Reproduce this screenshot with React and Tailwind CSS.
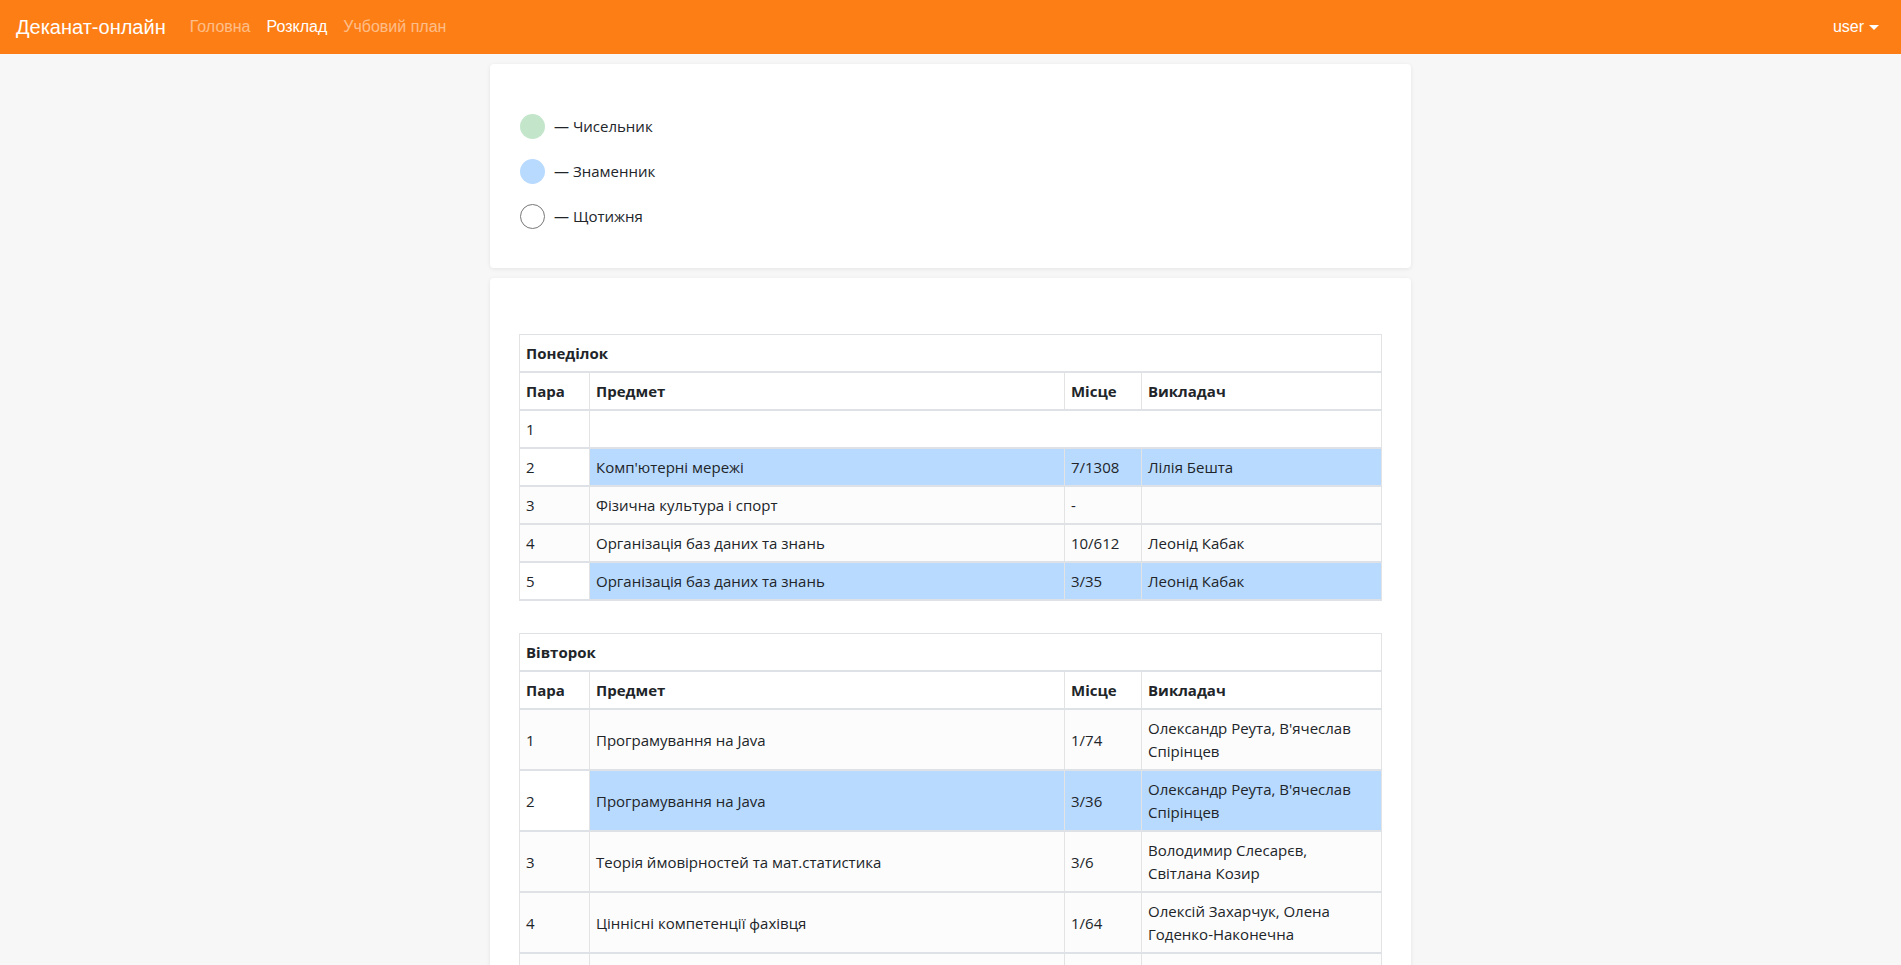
import React from "react"

const monday = [
  { n: 1, empty: true },
  { n: 2, subject: "Комп'ютерні мережі", room: "7/1308", teacher: "Лілія Бешта", kind: "den" },
  { n: 3, subject: "Фізична культура і спорт", room: "-", teacher: "", kind: "week" },
  { n: 4, subject: "Організація баз даних та знань", room: "10/612", teacher: "Леонід Кабак", kind: "week" },
  { n: 5, subject: "Організація баз даних та знань", room: "3/35", teacher: "Леонід Кабак", kind: "den" },
]

const tuesday = [
  { n: 1, subject: "Програмування на Java", room: "1/74", teacher: "Олександр Реута, В'ячеслав Спірінцев", kind: "week" },
  { n: 2, subject: "Програмування на Java", room: "3/36", teacher: "Олександр Реута, В'ячеслав Спірінцев", kind: "den" },
  { n: 3, subject: "Теорія ймовірностей та мат.статистика", room: "3/6", teacher: "Володимир Слесарєв, Світлана Козир", kind: "week" },
  { n: 4, subject: "Ціннісні компетенції фахівця", room: "1/64", teacher: "Олексій Захарчук, Олена Годенко-Наконечна", kind: "week" },
  { n: 5, subject: "", room: "", teacher: "", kind: "week" },
]

const rowBg = {
  den: "bg-[#b8daff]",
  num: "bg-[#c3e6cb]",
  week: "bg-[#fcfcfc]",
}

function DayTable({ day, rows }) {
  const cell = "pl-[6px] pr-[6px] pt-[7px] pb-[6px] border-x border-x-[#e3e3e3] border-b-2 border-b-[#dee2e6] align-middle"
  const last = "pl-[6px] pr-[14px] pt-[7px] pb-[6px] border-x border-x-[#e3e3e3] border-b-2 border-b-[#dee2e6] align-middle"
  return (
    <table className="w-full border-collapse border border-[#dee2e6] text-[15px] leading-[23px] text-[#212529] table-fixed">
      <colgroup>
        <col className="w-[70px]" />
        <col />
        <col className="w-[77px]" />
        <col className="w-[240px]" />
      </colgroup>
      <thead>
        <tr>
          <th colSpan={4} className={`${cell} text-left font-bold`}>{day}</th>
        </tr>
        <tr>
          <th className={`${cell} text-left font-bold`}>Пара</th>
          <th className={`${cell} text-left font-bold`}>Предмет</th>
          <th className={`${cell} text-left font-bold`}>Місце</th>
          <th className={`${last} text-left font-bold`}>Викладач</th>
        </tr>
      </thead>
      <tbody>
        {rows.map((r) =>
          r.empty ? (
            <tr key={r.n}>
              <td className={cell}>{r.n}</td>
              <td colSpan={3} className={cell}></td>
            </tr>
          ) : (
            <tr key={r.n}>
              <td className={`${cell} ${r.kind === "week" ? rowBg.week : "bg-white"}`}>{r.n}</td>
              <td className={`${cell} ${rowBg[r.kind]}`}>{r.subject}</td>
              <td className={`${cell} ${rowBg[r.kind]}`}>{r.room}</td>
              <td className={`${last} ${rowBg[r.kind]}`}>{r.teacher}</td>
            </tr>
          )
        )}
      </tbody>
    </table>
  )
}

export default function App() {
  return (
    <div className="min-h-screen bg-[#f7f7f7] font-['Open_Sans',sans-serif]">
      <nav className="h-[54px] bg-[#fd7e14] flex items-center px-4 font-['Liberation_Sans',Arial,sans-serif]">
        <span className="text-white text-[20px] mr-[24px]">Деканат-онлайн</span>
        <div className="flex gap-[16px] text-[16px]">
          <span className="text-white/50">Головна</span>
          <span className="text-white">Розклад</span>
          <span className="text-white/50">Учбовий план</span>
        </div>
        <div className="ml-auto flex items-center text-white text-[16px] mr-[6px]">
          user
          <span className="ml-[5px] w-0 h-0 border-x-[5px] border-x-transparent border-t-[5px] border-t-white"></span>
        </div>
      </nav>

      <main className="w-[921px] mx-auto pt-[10px] flex flex-col gap-[10px]">
        <div className="bg-white rounded-[4px] shadow-[0_1px_4px_rgba(0,0,0,0.08)] pl-[30px] pt-[50px] pb-[39px] flex flex-col gap-[20px] text-[15px] text-[#212529]">
          <div className="flex items-center gap-[9px]">
            <span className="w-[25px] h-[25px] rounded-full bg-[#c3e6cb]"></span>
            <span>— Чисельник</span>
          </div>
          <div className="flex items-center gap-[9px]">
            <span className="w-[25px] h-[25px] rounded-full bg-[#b8daff]"></span>
            <span>— Знаменник</span>
          </div>
          <div className="flex items-center gap-[9px]">
            <span className="w-[25px] h-[25px] rounded-full border border-[#777]"></span>
            <span>— Щотижня</span>
          </div>
        </div>

        <div className="bg-white rounded-[4px] shadow-[0_1px_4px_rgba(0,0,0,0.08)] px-[29px] pt-[56px] pb-[30px] flex flex-col gap-[32px]">
          <DayTable day="Понеділок" rows={monday} />
          <DayTable day="Вівторок" rows={tuesday} />
        </div>
      </main>
    </div>
  )
}
